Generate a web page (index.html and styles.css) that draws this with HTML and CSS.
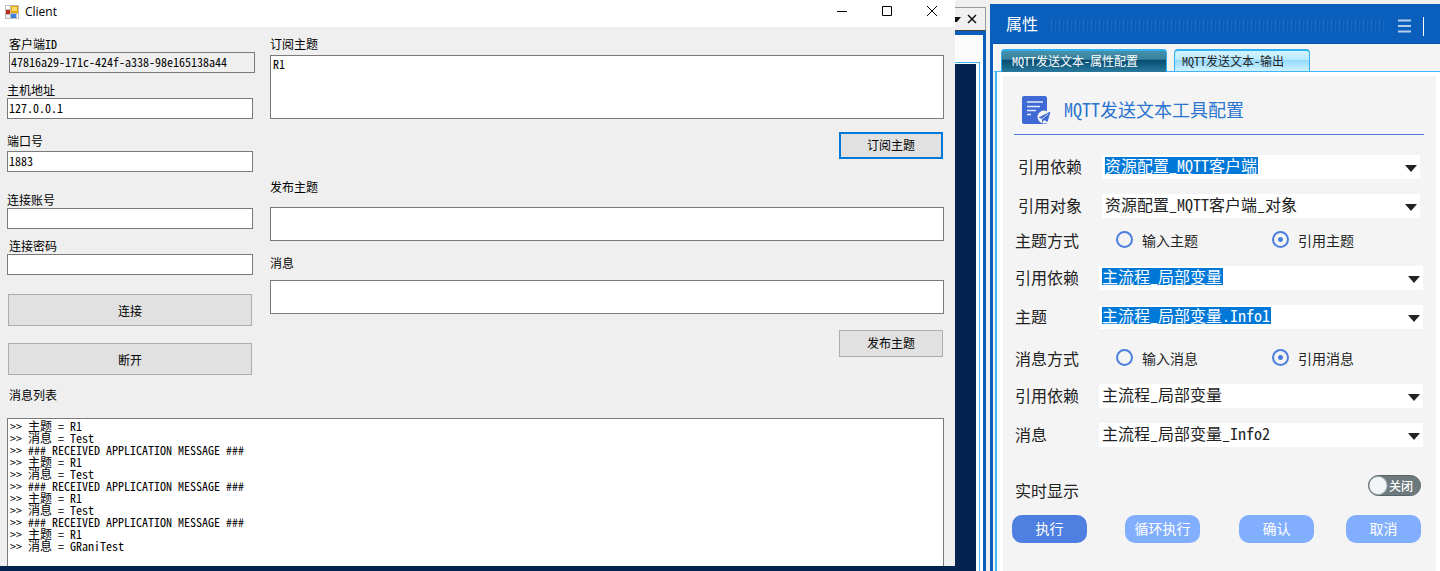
FILE: index.html
```html
<!DOCTYPE HTML>
<html lang="zh-CN">
<head>
    <meta charset="UTF-8">
    <title>Client</title>
    <link rel="stylesheet" href="styles.css">
</head>
<body>
<div class="desk">
    <!--客户端窗口-->
    <div class="win">
        <div class="winBar">
            <svg class="winIcon" width="14" height="14" viewBox="0 0 14 14">
                <rect width="14" height="14" fill="#bdbdbd"/>
                <rect x="1" y="1" width="4" height="3" fill="#fff"/>
                <rect x="1" y="10" width="4" height="3" fill="#eee"/>
                <rect x="12" y="9" width="1" height="4" fill="#fff"/>
                <rect x="6" y="1" width="7" height="7" fill="#e9a800"/>
                <rect x="7" y="2" width="5" height="4" fill="#ffdc6b"/>
                <rect x="1" y="5" width="4" height="4" fill="#c22a1c"/>
                <rect x="6" y="9" width="5" height="4" fill="#3b7fe0"/>
            </svg>
            <h1>Client</h1>
            <button class="winBtn" aria-label="最小化"><svg width="12" height="12" viewBox="0 0 12 12"><path d="M1 5.500h10" stroke="#000" fill="none"/></svg></button>
            <button class="winBtn" aria-label="最大化"><svg width="12" height="12" viewBox="0 0 12 12"><path d="M1.500 .5h9v9h-9z" stroke="#000" fill="none"/></svg></button>
            <button class="winBtn" aria-label="关闭窗口"><svg width="12" height="12" viewBox="0 0 12 12"><path d="M1 0l10 10M11 0L1 10" stroke="#000" fill="none"/></svg></button>
        </div>
        <div class="winCon">
            <div class="conLeft">
                <div class="item itemId">
                    <label for="clientId">客户端ID</label>
                    <input type="text" id="clientId" value="47816a29-171c-424f-a338-98e165138a44" readonly>
                </div>
                <div class="item itemHost">
                    <label for="host">主机地址</label>
                    <input type="text" id="host" value="127.0.0.1">
                </div>
                <div class="item itemPort">
                    <label for="port">端口号</label>
                    <input type="text" id="port" value="1883">
                </div>
                <div class="item itemUser">
                    <label for="user">连接账号</label>
                    <input type="text" id="user">
                </div>
                <div class="item itemPwd">
                    <label for="pwd">连接密码</label>
                    <input type="password" id="pwd">
                </div>
                <button class="btn btnLong">连接</button>
                <button class="btn btnLong">断开</button>
            </div>
            <div class="conRight">
                <label for="sub">订阅主题</label>
                <textarea class="sub" id="sub">R1</textarea>
                <button class="btn btnShort btnFocus">订阅主题</button>
                <label class="pubLabel" for="pub">发布主题</label>
                <input class="pub" type="text" id="pub">
                <label class="msgLabel" for="msg">消息</label>
                <input class="pub" type="text" id="msg">
                <button class="btn btnShort">发布主题</button>
            </div>
        </div>
        <label class="logLabel" for="log">消息列表</label>
        <textarea class="log" id="log" readonly>
&gt;&gt; 主题 = R1
&gt;&gt; 消息 = Test
&gt;&gt; ### RECEIVED APPLICATION MESSAGE ###
&gt;&gt; 主题 = R1
&gt;&gt; 消息 = Test
&gt;&gt; ### RECEIVED APPLICATION MESSAGE ###
&gt;&gt; 主题 = R1
&gt;&gt; 消息 = Test
&gt;&gt; ### RECEIVED APPLICATION MESSAGE ###
&gt;&gt; 主题 = R1
&gt;&gt; 消息 = GRaniTest</textarea>
    </div>

    <!--后面的编辑区-->
    <div class="back">
        <div class="backBar">
            <svg width="6" height="5" viewBox="0 0 6 5"><path d="M0 0h6L2 5H0z" fill="#111"/></svg>
            <button aria-label="关闭页面"><svg width="10" height="10" viewBox="0 0 10 10"><path d="M1 1l8 8M9 1L1 9" stroke="#111" stroke-width="1.500" fill="none"/></svg></button>
        </div>
        <div class="backFrame">
            <div class="backPage"></div>
        </div>
    </div>

    <!--属性面板-->
    <div class="panel">
        <div class="panelHead">
            <h2>属性</h2>
            <div class="grip"></div>
            <button class="menu" aria-label="菜单"><svg width="14" height="14" viewBox="0 0 14 14"><path d="M0 1.500h13M0 7h13M0 12.500h13" stroke="#b5cdec" stroke-width="2" fill="none"/></svg></button>
            <span class="headLine"></span>
        </div>
        <div class="tabs">
            <button class="tab active">MQTT发送文本-属性配置</button>
            <button class="tab tabOut">MQTT发送文本-输出</button>
        </div>
        <div class="panelCon">
            <div class="panelBox">
                <div class="caption">
                    <svg width="29" height="29" viewBox="0 0 29 29">
                        <rect width="25" height="28" rx="2" fill="#3f69d4"/>
                        <path d="M5 6h16M5 10.500h13M5 14.500h9M5 18.500h4" stroke="#e6ecfa" stroke-width="1.500" fill="none"/>
                        <circle cx="22" cy="21" r="6.500" fill="#f4f4f4"/>
                        <path d="M28.500 15.500L16.500 21.500l3.500 1.500v4l2-3 3.500 2z" fill="#3f69d4"/>
                        <path d="M26 18l-6 5" stroke="#f4f4f4" stroke-width=".8"/>
                    </svg>
                    <h3>MQTT发送文本工具配置</h3>
                </div>
                <div class="rows rowsIn">
                    <div class="row">
                        <label for="dep1">引用依赖</label>
                        <div class="combo"><select class="picked" id="dep1"><option>资源配置_MQTT客户端</option></select><i></i></div>
                    </div>
                    <div class="row">
                        <label for="obj">引用对象</label>
                        <div class="combo"><select id="obj"><option>资源配置_MQTT客户端_对象</option></select><i></i></div>
                    </div>
                </div>
                <div class="radios" role="radiogroup" aria-labelledby="topicWay">
                    <span id="topicWay">主题方式</span>
                    <label><input type="radio" name="topicWay">输入主题</label>
                    <label><input type="radio" name="topicWay" checked>引用主题</label>
                </div>
                <div class="rows">
                    <div class="row">
                        <label for="dep2">引用依赖</label>
                        <div class="combo"><select class="picked" id="dep2"><option>主流程_局部变量</option></select><i></i></div>
                    </div>
                    <div class="row">
                        <label for="topic">主题</label>
                        <div class="combo"><select class="picked" id="topic"><option>主流程_局部变量.Info1</option></select><i></i></div>
                    </div>
                </div>
                <div class="radios radiosMsg" role="radiogroup" aria-labelledby="msgWay">
                    <span id="msgWay">消息方式</span>
                    <label><input type="radio" name="msgWay">输入消息</label>
                    <label><input type="radio" name="msgWay" checked>引用消息</label>
                </div>
                <div class="rows">
                    <div class="row">
                        <label for="dep3">引用依赖</label>
                        <div class="combo"><select id="dep3"><option>主流程_局部变量</option></select><i></i></div>
                    </div>
                    <div class="row">
                        <label for="info">消息</label>
                        <div class="combo"><select id="info"><option>主流程_局部变量_Info2</option></select><i></i></div>
                    </div>
                </div>
                <div class="live">
                    <label for="live">实时显示</label>
                    <span class="switch"><input type="checkbox" id="live"><b>关闭</b></span>
                </div>
                <div class="acts">
                    <button class="act actRun">执行</button>
                    <button class="act">循环执行</button>
                    <button class="act">确认</button>
                    <button class="act">取消</button>
                </div>
            </div>
        </div>
    </div>
</div>
</body>
</html>
```
FILE: styles.css
```css
*{
    box-sizing: border-box;
}
body{
    margin:0;
    background: #f0f0f0;
}
body,button,input,textarea,select{
    font-family: "Noto Sans CJK SC",sans-serif;
    font-size: 12px;
    font-feature-settings: "hwid";
    color: #000;
}
h1,h2,h3{
    margin:0;
    font-weight: normal;
}
button{
    padding:0;
    border:0;
    background: none;
}
.desk{
    display: grid;
    grid-template-columns: minmax(0,1fr) 35px 450px;
    min-height: 100vh;
}

/*客户端窗口*/
.win{
    display: flex;
    flex-direction: column;
    background: #efefef;
    border-bottom: 5px solid #03224f;
}
.winBar{
    display: flex;
    align-items: center;
    height: 27px;
    padding: 0 1px 4px 5px;
    background: #fff;
}
.winBar h1{
    flex: 1;
    margin-left: 6px;
    font: 12px/20px "Open Sans",sans-serif;
}
.winBtn{
    width: 45px;
    height: 22px;
}
.winBtn svg{
    display: block;
    margin: 0 auto;
}
.winCon{
    display: grid;
    grid-template-columns: 246px minmax(0,1fr);
    column-gap: 17px;
    padding: 10px 11px 0 7px;
}
.win label{
    display: block;
    padding-bottom: 2px;
    line-height: 13px;
}
.win input,.win textarea{
    display: block;
    width: 100%;
    margin: 0;
    padding: 0 2px;
    border: 1px solid #7a7a7a;
    border-radius: 0;
    background: #fff;
    outline: none;
    resize: none;
    overflow: hidden;
}
.item{
    margin-bottom: 10px;
}
.win .item input{
    height: 21px;
    padding: 0 2px 3px 1px;
}
.win .itemId input{
    background: #efefef;
}
.itemId{
    margin: 0 -2px 10px 2px;
}
.itemHost{
    margin-bottom: 15px;
}
.itemPort{
    margin-bottom: 21px;
}
.itemPort label{
    margin-bottom: 2px;
}
.itemPwd{
    margin-bottom: 19px;
}
.itemPwd label{
    padding-left: 2px;
}
.btn{
    display: block;
    border: 1px solid #adadad;
    background: #e1e1e1;
}
.btnLong{
    width: 244px;
    height: 32px;
    margin: 0 1px 17px;
}
.btnLong:last-child{
    margin-bottom: 0;
}
.btnShort{
    width: 104px;
    height: 27px;
    margin: 0 1px 0 auto;
    padding-bottom: 2px;
}
.btnFocus{
    border: 2px solid #0078d7;
}
.win .sub{
    height: 64px;
    margin: 3px 0 13px;
    padding-top: 1px;
    line-height: 14px;
}
.win .pubLabel{
    margin-top: 21px;
}
.win .pub{
    height: 34px;
    margin-top: 12px;
}
.win .msgLabel{
    margin: 15px 0 -3px;
}
.pub + .btnShort{
    margin-top: 16px;
}
.win .logLabel{
    margin: 13px 9px 15px;
}
.win .log{
    flex: 1;
    width: auto;
    min-height: 148px;
    margin: 0 11px 0 7px;
    padding-top: 1px;
    border-bottom: 0;
    line-height: 12px;
}

/*编辑区*/
.back{
    display: flex;
    flex-direction: column;
    padding: 7px 4px 0 0;
}
.backBar{
    display: flex;
    align-items: center;
    gap: 6px;
    height: 24px;
    border: solid #999;
    border-width: 1px 1px 1px 0;
    border-bottom-color: #444;
}
.backBar button{
    display: flex;
}
.backFrame{
    display: flex;
    flex: 1;
    padding: 27px 3px 0 0;
    border: solid #0a5fbd;
    border-width: 4px 3px 0 0;
    background: #fcfcfc;
}
.backPage{
    flex: 1;
    border: solid #3fb4f8;
    border-width: 1px 1px 0 0;
    padding: 1px 3px 0 0;
    background: #03224f content-box;
}

/*属性面板*/
.panel{
    display: flex;
    flex-direction: column;
    margin-top: 4px;
    border-left: 3px solid #0a5fbd;
    background: #f4f4f4;
}
.panelHead{
    display: flex;
    align-items: center;
    height: 40px;
    padding: 0 16px 0 13px;
    background: #0a5fbd;
    border-bottom: 1px solid #0850a4;
}
.panelHead h2{
    padding-bottom: 2px;
    font-size: 16px;
    line-height: 22px;
    color: #fff;
}
.grip{
    flex: 1;
    height: 14px;
    margin: 5px 11px 0 13px;
    background:
        repeating-linear-gradient(90deg,#1f6dc4 0 1px,transparent 1px 8px) 0 0/100% 14px no-repeat,
        repeating-linear-gradient(90deg,transparent 0 4px,#1a69c2 4px 5px,transparent 5px 8px) 0 2px/100% 9px no-repeat;
}
.menu{
    display: flex;
    margin-top: 4px;
}
.headLine{
    width: 1px;
    height: 19px;
    margin: 5px 0 0 11px;
    background: #fff;
}
.tabs{
    display: flex;
    gap: 7px;
    height: 28px;
    padding: 5px 0 0 6px;
    border-left: 2px solid #fff;
    border-bottom: 1px solid #3fb4f8;
}
.tab{
    height: 22px;
    padding: 0 10px 2px;
    border: 1px solid #2fb1ef;
    border-top-width: 2px;
    border-bottom: 0;
    border-radius: 4px 4px 0 0;
    width: 166px;
    text-align: left;
    color: #222;
    background: linear-gradient(#d3f3ff 0,#b9eaff 45%,#93daff 46%,#d0f2ff 100%);
}
.tabOut{
    width: 136px;
    padding-left: 7px;
}
.active{
    height: 23px;
    padding-bottom: 3px;
    color: #fff;
    background: linear-gradient(#4591ab 0,#3a819e 40%,#044a71 42%,#2a7b9e 100%);
}
.panelCon{
    flex: 1;
    margin-left: 2px;
    padding: 4px 4px 0 6px;
    border-left: 2px solid #3fb4f8;
    background: #fff;
}
.panelBox{
    height: 100%;
    padding: 16px 12px 0 11px;
    background: #f4f4f4;
}
.caption{
    display: flex;
    align-items: center;
    gap: 13px;
    height: 43px;
    padding: 0 0 6px 8px;
    border-bottom: 1px solid #4d7fdb;
}
.caption h3{
    padding-bottom: 2px;
    font-size: 18px;
    line-height: 24px;
    color: #2b74cf;
}
.rows{
    display: grid;
    gap: 15px;
    padding: 0 1px;
}
.rowsIn{
    padding: 20px 4px 0;
}
.row{
    display: flex;
    align-items: center;
    height: 24px;
    font-size: 16px;
    line-height: 22px;
    color: #222;
}
.row label{
    flex: 0 0 84px;
    padding-bottom: 2px;
}
.combo{
    display: flex;
    flex: 1;
    align-items: center;
    justify-content: space-between;
    height: 24px;
    padding: 0 3px;
    background: #fff;
}
.combo i{
    width: 12px;
    height: 7px;
    margin-top: 3px;
    background: #222;
    clip-path: polygon(0 0,100% 0,50% 100%);
}
.combo select{
    appearance: none;
    height: 17px;
    margin: 0 0 3px;
    padding: 0;
    border: 0;
    border-radius: 0;
    background: none;
    font-size: 16px;
    line-height: 17px;
    color: #222;
}
.combo .picked{
    background: #0078d7;
    color: #fff;
}
.radios{
    display: grid;
    grid-template-columns: 101px 156px 1fr;
    align-items: center;
    height: 20px;
    margin: 10px 0 18px;
    padding-left: 1px;
    font-size: 16px;
    color: #222;
}
.radiosMsg{
    margin-top: 17px;
}
.radios label{
    display: flex;
    align-items: center;
    gap: 9px;
    padding-bottom: 1px;
    font-size: 14px;
}
.radios input{
    appearance: none;
    width: 17px;
    height: 17px;
    margin: 0;
    border: 2px solid #4d7fdf;
    border-radius: 50%;
}
.radios input:checked{
    background: radial-gradient(circle,#4d7fdf 0 2px,transparent 3px) border-box;
}
.live{
    display: flex;
    justify-content: space-between;
    align-items: flex-start;
    margin-top: 28px;
    padding: 0 3px 0 1px;
}
.live label{
    margin-top: 3px;
    font-size: 16px;
    line-height: 24px;
    color: #222;
}
.switch{
    display: grid;
    align-items: center;
    width: 53px;
    height: 21px;
}
.switch input,.switch b{
    grid-area: 1/1;
}
.switch input{
    appearance: none;
    width: 53px;
    height: 21px;
    margin: 0;
    border: 1px solid #56646a;
    border-radius: 11px;
    background: radial-gradient(circle at 9px 50%,#f1f5f7 0 8px,#a4afb3 9px,transparent 10px) #6c797d;
}
.switch b{
    z-index: 1;
    padding-left: 21px;
    font-weight: 500;
    line-height: 20px;
    color: #fff;
    pointer-events: none;
}
.acts{
    display: grid;
    grid-template-columns: 113fr 114fr 107fr 75px;
    margin: 13px 3px 0 -2px;
}
.act{
    width: 75px;
    height: 28px;
    padding-bottom: 2px;
    border-radius: 10px;
    background: #82aeff;
    color: #fff;
    font-size: 14px;
    line-height: 26px;
}
.actRun{
    background: #4f7fe0;
}
```
